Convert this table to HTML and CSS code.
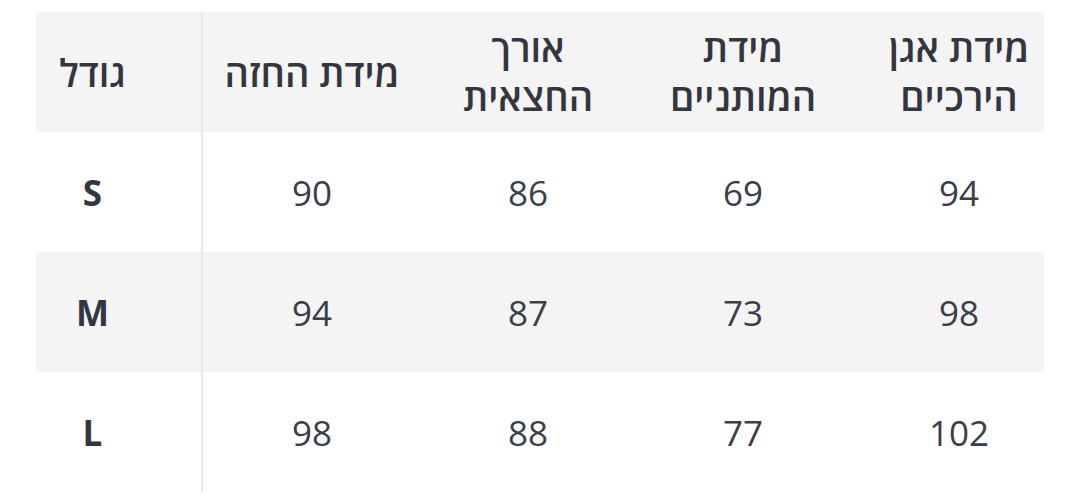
FILE: index.html
```html
<!DOCTYPE html>
<html lang="he">
<head>
<meta charset="utf-8">
<link rel="stylesheet" href="styles.css">
</head>
<body>
<div class="wrap">
  <div class="table">
    <div class="cell head first">גודל</div>
    <div class="cell head">מידת החזה</div>
    <div class="cell head">אורך<br>החצאית</div>
    <div class="cell head">מידת<br>המותניים</div>
    <div class="cell head">מידת אגן<br>הירכיים</div>

    <div class="cell size first">S</div>
    <div class="cell">90</div>
    <div class="cell">86</div>
    <div class="cell">69</div>
    <div class="cell">94</div>

    <div class="cell size first alt">M</div>
    <div class="cell alt">94</div>
    <div class="cell alt">87</div>
    <div class="cell alt">73</div>
    <div class="cell alt">98</div>

    <div class="cell size first">L</div>
    <div class="cell">98</div>
    <div class="cell">88</div>
    <div class="cell">77</div>
    <div class="cell">102</div>
  </div>
</div>
</body>
</html>
```

FILE: styles.css
```css
html, body {
  margin: 0;
  padding: 0;
  background: #ffffff;
}
body {
  padding: 12px 0 0 36px;
  font-family: "Open Sans", "Noto Sans", sans-serif;
  color: #363a46;
}
.wrap {
  width: 1008px;
  overflow: hidden;
}
.table {
  display: grid;
  grid-template-columns: 167px 218px 214px 216px 216px;
  grid-auto-rows: 120px;
  width: 1031px;
}
.cell {
  display: flex;
  align-items: center;
  justify-content: center;
  text-align: center;
  font-size: 35px;
  line-height: 1;
  color: #3a3e4a;
}
.head {
  background: #f4f4f4;
  font-weight: 600;
  font-size: 38px;
  line-height: 49px;
  color: #33363f;
  direction: rtl;
}
.first {
  border-right: 2px solid #e8e8e8;
  padding-right: 52px;
}
.size {
  font-weight: 700;
  color: #333642;
}
.alt {
  background: #f4f4f4;
}
```
